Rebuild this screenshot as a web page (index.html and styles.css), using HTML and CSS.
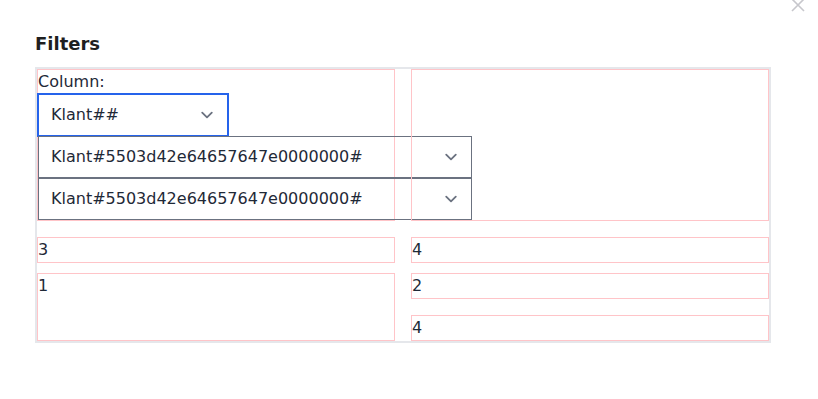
FILE: index.html
```html
<!DOCTYPE html>
<html>
<head>
<meta charset="utf-8">
<link rel="stylesheet" href="styles.css">
</head>
<body>
<div class="modal">
  <button class="close" aria-label="Close">
    <svg width="14" height="14" viewBox="0 0 14 14"><path d="M1 1L13 13M13 1L1 13" stroke="#c7c7cc" stroke-width="1.6" fill="none"/></svg>
  </button>
  <h2 class="title">Filters</h2>
  <div class="board">
    <div class="row row-top">
      <div class="cell">
        <div class="label">Column:</div>
        <div class="select select-focus"><span>Klant##</span><svg class="chev" width="24" height="24" viewBox="0 0 20 20"><path d="M6 8l4 4 4-4" stroke="#6b7280" stroke-width="1.5" fill="none" stroke-linecap="round" stroke-linejoin="round"/></svg></div>
        <div class="select select-wide"><span>Klant#5503d42e64657647e0000000#</span><svg class="chev" width="24" height="24" viewBox="0 0 20 20"><path d="M6 8l4 4 4-4" stroke="#6b7280" stroke-width="1.5" fill="none" stroke-linecap="round" stroke-linejoin="round"/></svg></div>
        <div class="select select-wide"><span>Klant#5503d42e64657647e0000000#</span><svg class="chev" width="24" height="24" viewBox="0 0 20 20"><path d="M6 8l4 4 4-4" stroke="#6b7280" stroke-width="1.5" fill="none" stroke-linecap="round" stroke-linejoin="round"/></svg></div>
      </div>
      <div class="cell"></div>
    </div>
    <div class="row row-mid">
      <div class="cell cell-line">3</div>
      <div class="cell cell-line">4</div>
    </div>
    <div class="row row-bottom">
      <div class="cell cell-tall">1</div>
      <div class="stack">
        <div class="cell cell-line">2</div>
        <div class="cell cell-line">4</div>
      </div>
    </div>
  </div>
</div>
</body>
</html>
```
FILE: styles.css
```css
html, body {
  margin: 0;
  padding: 0;
  background: #ffffff;
}
body {
  font-family: "DejaVu Sans", Verdana, sans-serif;
  color: #1f2937;
}
.modal {
  position: relative;
  width: 818px;
  height: 399px;
  box-sizing: border-box;
  padding: 30px 0 0 35px;
}
.close {
  position: absolute;
  top: -2px;
  left: 791px;
  padding: 0;
  margin: 0;
  border: 0;
  background: transparent;
  width: 14px;
  height: 14px;
  line-height: 0;
}
.title {
  margin: 0;
  font-size: 18px;
  line-height: 28px;
  font-weight: bold;
  color: #1f1f1f;
}
.board {
  margin-top: 9px;
  width: 732px;
  border: 2px solid #e5e7eb;
  display: flex;
  flex-direction: column;
  font-size: 16px;
  line-height: 24px;
}
.row {
  display: grid;
  grid-template-columns: 358px 358px;
  column-gap: 16px;
}
.row-top {
  margin-bottom: 16px;
}
.row-mid {
  margin-bottom: 10px;
}
.cell {
  border: 1px solid #ffc4c8;
  box-sizing: border-box;
  min-width: 0;
}
.cell-line {
  height: 26px;
}
.cell-tall {
  height: 68px;
}
.stack {
  display: flex;
  flex-direction: column;
  gap: 16px;
}
.label {
  height: 24px;
}
.select {
  box-sizing: border-box;
  height: 42px;
  display: flex;
  align-items: center;
  justify-content: space-between;
  padding: 0 8px 0 12px;
  border: 1px solid #6b7280;
  background: transparent;
  white-space: nowrap;
}
.select-focus {
  width: 190px;
  border-color: #2563eb;
  box-shadow: 0 0 0 1px #2563eb;
}
.select-wide {
  width: 434px;
}
.chev {
  flex: none;
  display: block;
}
```
